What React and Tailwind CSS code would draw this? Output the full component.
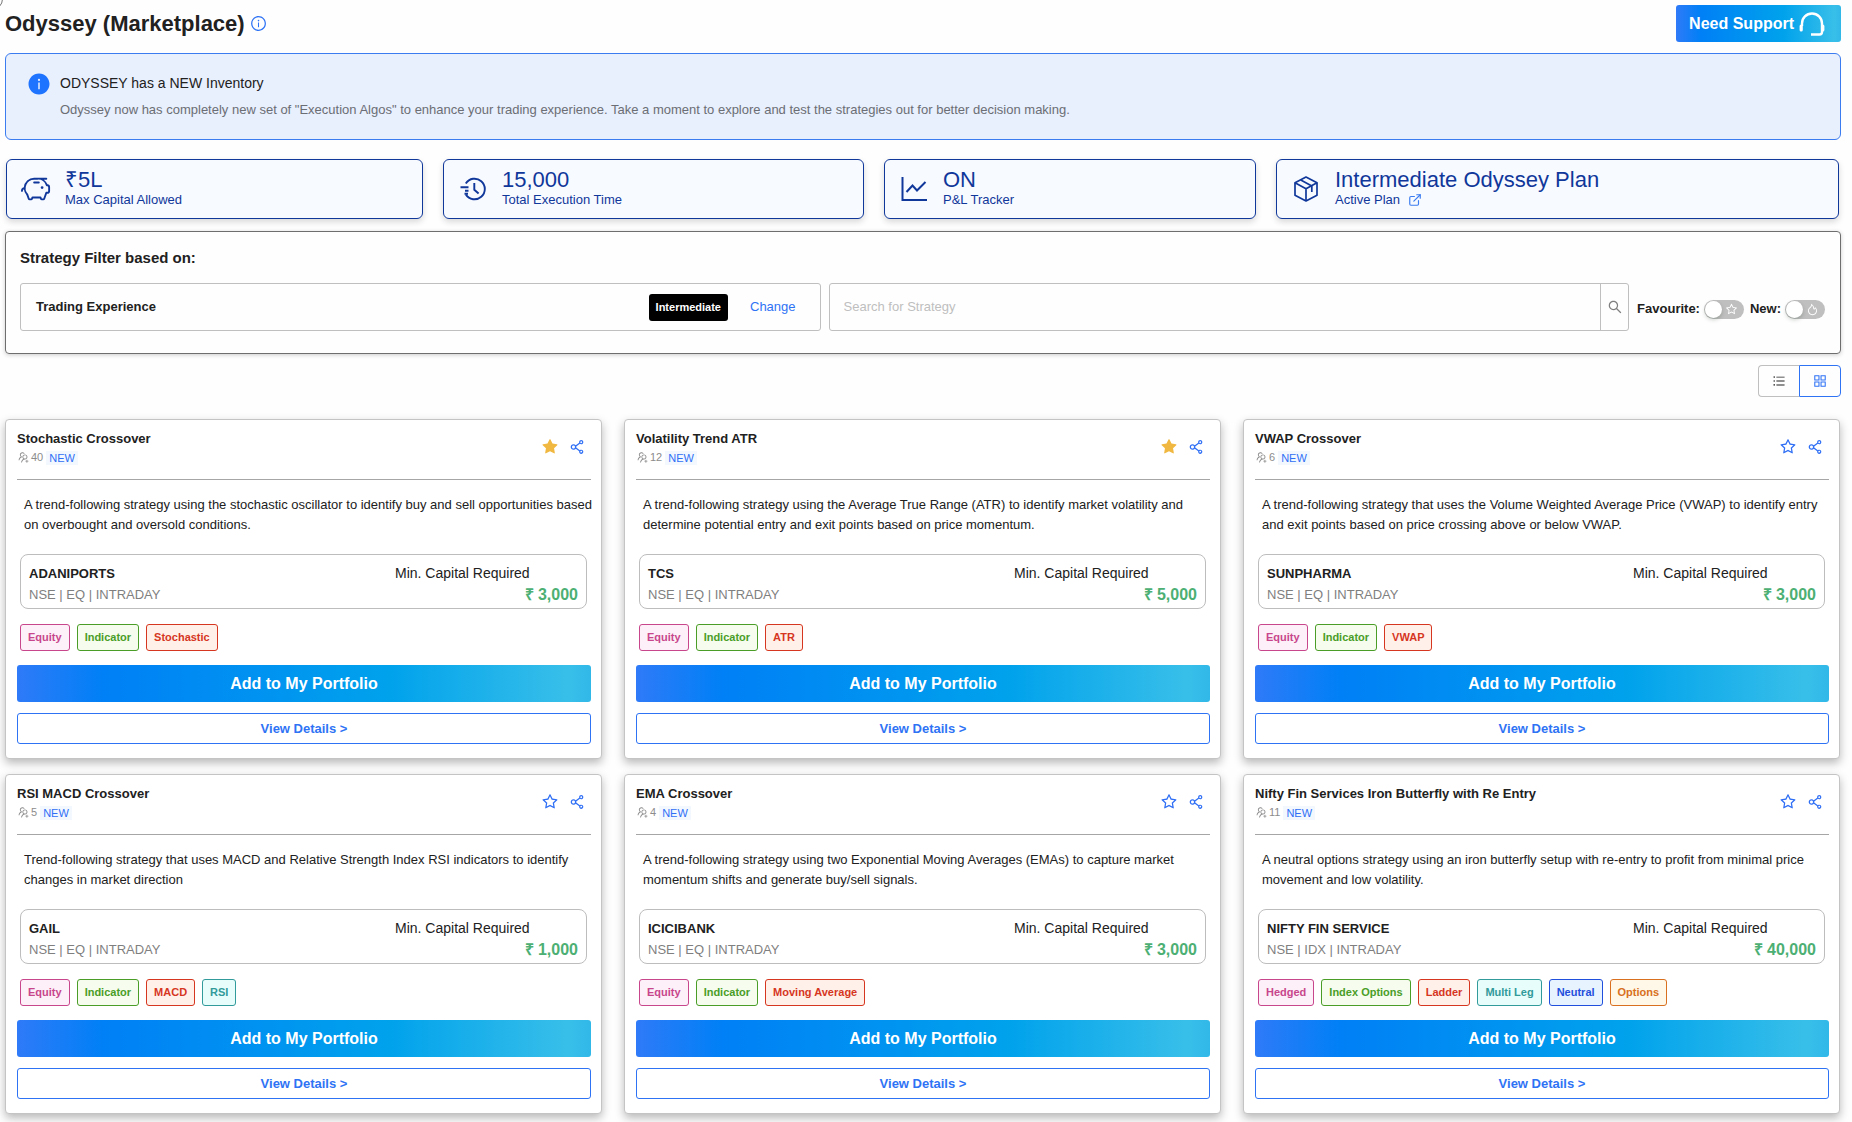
import React from 'react';
import { clsx } from 'clsx';
import {
  AiFillInfoCircle,
  AiFillStar,
  AiOutlineAppstore,
  AiOutlineFire,
  AiOutlineInfoCircle,
  AiOutlineSearch,
  AiOutlineShareAlt,
  AiOutlineStar,
  AiOutlineUnorderedList,
  AiOutlineUsergroupAdd,
} from 'react-icons/ai';
import { PiPiggyBank } from 'react-icons/pi';
import { FiExternalLink } from 'react-icons/fi';

const GRADIENT =
  'bg-[linear-gradient(90deg,#2f7af8_0%,#0080f6_15%,#00a2ec_65%,#38bfe9_96%,#32b8e8_100%)]';

const TAG_COLORS = {
  magenta: 'border-[#c8468c] bg-[#fdf0f8] text-[#c8468c]',
  green: 'border-[#4a9e28] bg-[#f6fcee] text-[#4a9e28]',
  red: 'border-[#d6361f] bg-[#fff1e9] text-[#d6361f]',
  cyan: 'border-[#319a9a] bg-[#e7fdfc] text-[#319a9a]',
  blue: 'border-[#1f4fdc] bg-[#e7f3fe] text-[#1f4fdc]',
  orange: 'border-[#d87020] bg-[#fff7e7] text-[#d87020]',
};

const TAG_ORDER = ['magenta', 'green', 'red', 'cyan', 'blue', 'orange'];

const STRATEGIES = [
  {
    name: 'Stochastic Crossover',
    users: 40,
    favourite: true,
    description:
      'A trend-following strategy using the stochastic oscillator to identify buy and sell opportunities based on overbought and oversold conditions.',
    symbol: 'ADANIPORTS',
    segment: 'NSE | EQ | INTRADAY',
    capital: '3,000',
    tags: ['Equity', 'Indicator', 'Stochastic'],
  },
  {
    name: 'Volatility Trend ATR',
    users: 12,
    favourite: true,
    description:
      'A trend-following strategy using the Average True Range (ATR) to identify market volatility and determine potential entry and exit points based on price momentum.',
    symbol: 'TCS',
    segment: 'NSE | EQ | INTRADAY',
    capital: '5,000',
    tags: ['Equity', 'Indicator', 'ATR'],
  },
  {
    name: 'VWAP Crossover',
    users: 6,
    favourite: false,
    description:
      'A trend-following strategy that uses the Volume Weighted Average Price (VWAP) to identify entry and exit points based on price crossing above or below VWAP.',
    symbol: 'SUNPHARMA',
    segment: 'NSE | EQ | INTRADAY',
    capital: '3,000',
    tags: ['Equity', 'Indicator', 'VWAP'],
  },
  {
    name: 'RSI MACD Crossover',
    users: 5,
    favourite: false,
    description:
      'Trend-following strategy that uses MACD and Relative Strength Index RSI indicators to identify changes in market direction',
    symbol: 'GAIL',
    segment: 'NSE | EQ | INTRADAY',
    capital: '1,000',
    tags: ['Equity', 'Indicator', 'MACD', 'RSI'],
  },
  {
    name: 'EMA Crossover',
    users: 4,
    favourite: false,
    description:
      'A trend-following strategy using two Exponential Moving Averages (EMAs) to capture market momentum shifts and generate buy/sell signals.',
    symbol: 'ICICIBANK',
    segment: 'NSE | EQ | INTRADAY',
    capital: '3,000',
    tags: ['Equity', 'Indicator', 'Moving Average'],
  },
  {
    name: 'Nifty Fin Services Iron Butterfly with Re Entry',
    users: 11,
    favourite: false,
    description:
      'A neutral options strategy using an iron butterfly setup with re-entry to profit from minimal price movement and low volatility.',
    symbol: 'NIFTY FIN SERVICE',
    segment: 'NSE | IDX | INTRADAY',
    capital: '40,000',
    tags: ['Hedged', 'Index Options', 'Ladder', 'Multi Leg', 'Neutral', 'Options'],
  },
];

function HeadsetIcon() {
  return (
    <svg viewBox="0 0 26 24" className="h-6 w-[26px]" fill="none" stroke="currentColor" strokeWidth="2.4">
      <path d="M3 14v-2.500a10 10 0 0 1 20 0V20a2.500 2.500 0 0 1-2.500 2.500H12" />
      <path d="M2.200 14v4M23.800 14v4" strokeWidth="3.200" strokeLinecap="round" />
    </svg>
  );
}

function HistoryIcon() {
  return (
    <svg viewBox="0 0 28 28" className="size-7" fill="none" stroke="currentColor" strokeWidth="1.9">
      <path d="M6.800 8.500a10.300 10.300 0 1 1 0 11" />
      <path d="M1.500 12.200h8M6 15.800h3.500M5.500 18.800h3.500" />
      <path d="M15.300 8v6.700l4.300 3.800" />
    </svg>
  );
}

function ChartIcon() {
  return (
    <svg viewBox="0 0 28 28" className="size-7" fill="none" stroke="currentColor" strokeWidth="2">
      <path d="M2.500 2v23H27" />
      <path d="M6.500 17l6-6.500 4.500 5L25.500 7" />
    </svg>
  );
}

function PackageIcon() {
  return (
    <svg viewBox="0 0 24 26" className="h-[26px] w-6" fill="none" stroke="currentColor" strokeWidth="1.700" strokeLinejoin="round">
      <path d="M12 1l11 5.800v12.400L12 25 1 19.200V6.800z" />
      <path d="M1 6.800l11 6 11-6M12 12.800V25" />
      <path d="M6.800 4l11 6v6" />
    </svg>
  );
}

function StatCard({ icon, value, label }) {
  return (
    <div className="flex h-[60px] items-center rounded-md border border-[#10379a] bg-[#f7faff] px-[14px] text-[#10379a] shadow-[0_3px_6px_rgba(0,0,0,0.15)]">
      <span className="flex w-[30px] shrink-0 justify-center">{icon}</span>
      <div className="ml-[14px] pb-[2px]">
        <div className="text-[22px] leading-6">{value}</div>
        <div className="flex items-center gap-2 text-[13px] leading-4">{label}</div>
      </div>
    </div>
  );
}

function Toggle({ id, label, icon }) {
  return (
    <div className="flex items-center gap-1">
      <label htmlFor={id} className="text-[13px] font-bold">{label}</label>
      <span className="relative flex h-[19px] w-10 items-center justify-end rounded-full bg-[#bfbfbf] pr-[6px] text-white">
        <input
          id={id}
          type="checkbox"
          role="switch"
          className="absolute inset-0 cursor-pointer appearance-none rounded-full before:absolute before:top-px before:left-px before:size-[17px] before:rounded-full before:bg-white before:shadow-[0_2px_4px_rgba(0,35,11,0.2)]"
        />
        {icon}
      </span>
    </div>
  );
}

function StrategyCard({ strategy }) {
  const { name, users, favourite, description, symbol, segment, capital, tags } = strategy;

  return (
    <article className="flex flex-col rounded-[4px] border border-[#c4c4c4] bg-white pr-[10px] pb-[14px] pl-[11px] shadow-[0_4px_10px_rgba(0,0,0,0.28)]">
      {/* Title and actions */}
      <header className="flex h-[60px] items-center justify-between border-b border-[#a6a6a6] pb-[6px]">
        <div className="pt-[2px]">
          <h3 className="text-[13px] leading-5 font-bold">{name}</h3>
          <div className="flex h-[18px] items-center text-[11px] text-[#8c8c8c]">
            <AiOutlineUsergroupAdd className="mr-px size-[13px]" />
            {users}
            <span className="ml-[3px] bg-[#f3f8ff] px-[3px] leading-[14px] text-[#2f6ff5]">NEW</span>
          </div>
        </div>
        <div className="mr-[5px] flex items-center gap-[9px] text-[#2f6ff5]">
          <button type="button" aria-label="Favourite">
            {favourite ? <AiFillStar className="size-[18px] text-[#f0b840]" /> : <AiOutlineStar className="size-[18px]" />}
          </button>
          <button type="button" aria-label="Share">
            <AiOutlineShareAlt className="size-[18px]" />
          </button>
        </div>
      </header>

      <p className="mt-[15px] -mr-1 pl-[7px] text-[13px] leading-5">{description}</p>

      {/* Instrument */}
      <div className="mr-1 ml-[3px] mt-[19px] flex h-[55px] items-center justify-between rounded-lg border border-[#bdbdbd] px-2 pt-1">
        <div>
          <div className="text-[13px] leading-[21px] font-bold">{symbol}</div>
          <div className="text-[13px] leading-[21px] text-[#7f7f7f]">{segment}</div>
        </div>
        <div className="w-[183px]">
          <div className="text-sm leading-[21px]">Min. Capital Required</div>
          <div className="text-right text-base leading-[21px] font-bold text-[#4caf73]">₹ {capital}</div>
        </div>
      </div>

      {/* Tags */}
      <div className="mx-[3px] mt-[15px] mb-[14px] flex flex-wrap gap-[7px]">
        {tags.map((tag, i) => (
          <span
            key={tag}
            className={clsx('rounded-[3px] border px-[7px] text-[11px] leading-[25px] font-bold', TAG_COLORS[TAG_ORDER[i]])}
          >
            {tag}
          </span>
        ))}
      </div>

      <button type="button" className={clsx('h-[37px] rounded-[3px] text-base font-bold text-white', GRADIENT)}>
        Add to My Portfolio
      </button>
      <button
        type="button"
        className="mt-[11px] h-[31px] rounded-[3px] border border-[#2f73f5] text-[13px] font-bold text-[#2f73f5]"
      >
        View Details &gt;
      </button>
    </article>
  );
}

export default function App() {
  return (
    <main className="relative min-h-screen bg-[#fefefe] pt-[5px] pr-[11px] pb-2 pl-[5px] font-['Liberation_Sans',Arial,sans-serif] text-[#212121]">
      {/* Edge of the collapsed drawer handle */}
      <span className="absolute -top-3 -left-[19px] size-[22px] rounded-full border border-[#777]" />

      {/* Page header */}
      <div className="flex h-[37px] items-center justify-between">
        <h1 className="flex items-center gap-[5px] text-[22px] leading-6 font-bold">
          Odyssey (Marketplace)
          <AiOutlineInfoCircle className="size-[17px] text-[#2f73f5]" />
        </h1>
        <button type="button" className={clsx('flex h-full items-center gap-[5px] rounded-[3px] pr-4 pl-[13px] text-base font-bold text-white', GRADIENT)}>
          Need Support
          <HeadsetIcon />
        </button>
      </div>

      {/* Announcement */}
      <section className="mt-[11px] flex h-[87px] rounded-md border border-[#3b7cf0] bg-[#e8effd] px-[21px] pt-[18px]">
        <AiFillInfoCircle className="size-6 shrink-0 text-[#1f74ff]" />
        <div className="ml-[9px]">
          <h2 className="text-sm leading-[22px]">ODYSSEY has a NEW Inventory</h2>
          <p className="mt-[6px] text-[13px] leading-5 text-[#6b6e74]">
            Odyssey now has completely new set of "Execution Algos" to enhance your trading experience. Take a moment to explore and test the strategies out for better decision making.
          </p>
        </div>
      </section>

      {/* Plan summary */}
      <section className="mt-[19px] mr-[2px] ml-px grid grid-cols-[417fr_421fr_372fr_563fr] gap-5">
        <StatCard icon={<PiPiggyBank className="size-[30px]" />} value="₹5L" label="Max Capital Allowed" />
        <StatCard icon={<HistoryIcon />} value="15,000" label="Total Execution Time" />
        <StatCard icon={<ChartIcon />} value="ON" label="P&L Tracker" />
        <StatCard
          icon={<PackageIcon />}
          value="Intermediate Odyssey Plan"
          label={
            <>
              Active Plan
              <a href="#plan" aria-label="Open plan" className="text-[#3b7cf0]">
                <FiExternalLink className="size-[14px]" />
              </a>
            </>
          }
        />
      </section>

      {/* Filters */}
      <section className="mt-3 h-[123px] rounded-[4px] border border-[#6e6e6e] px-[14px] pt-4 shadow-[0_1px_4px_rgba(0,0,0,0.2)]">
        <h2 className="text-[15px] leading-5 font-bold">Strategy Filter based on:</h2>
        <div className="mt-[15px] flex gap-2">
          <div className="flex h-12 flex-1 items-center rounded-[3px] border border-[#bfbfbf] text-[13px]">
            <span className="flex-1 pl-[15px] font-bold">Trading Experience</span>
            <span className="rounded-[3px] bg-black px-[7px] text-[11px] leading-[27px] font-bold text-white">Intermediate</span>
            <button type="button" className="mr-6 ml-[22px] text-[#2f73f5]">Change</button>
          </div>
          <div className="flex h-12 flex-1 rounded-[3px] border border-[#bfbfbf] text-[13px]">
            <input
              type="text"
              aria-label="Search for Strategy"
              placeholder="Search for Strategy"
              className="min-w-0 flex-1 px-[14px] outline-none placeholder:text-[#bfbfbf]"
            />
            <button type="button" aria-label="Search" className="flex w-7 items-center justify-center border-l border-[#bfbfbf] text-[#7f7f7f]">
              <AiOutlineSearch className="size-4" />
            </button>
          </div>
          <div className="flex items-center gap-[6px] pt-1 pr-px">
            <Toggle id="favourite" label="Favourite:" icon={<AiOutlineStar className="size-[13px]" />} />
            <Toggle id="new" label="New:" icon={<AiOutlineFire className="size-[13px]" />} />
          </div>
        </div>
      </section>

      {/* View switch */}
      <div className="mt-[11px] flex justify-end">
        <button type="button" aria-label="List view" className="flex h-8 w-[41px] items-center justify-center rounded-l-[4px] border border-r-0 border-[#bfbfbf] text-[#212121]">
          <AiOutlineUnorderedList className="size-[14px]" />
        </button>
        <button type="button" aria-label="Grid view" className="flex h-8 w-[42px] items-center justify-center rounded-r-[4px] border border-[#2f73f5] text-[#2f73f5]">
          <AiOutlineAppstore className="size-4" />
        </button>
      </div>

      {/* Strategies */}
      <section className="mt-[22px] mr-px grid grid-cols-3 gap-x-[22px] gap-y-[15px]">
        {STRATEGIES.map((strategy) => (
          <StrategyCard key={strategy.name} strategy={strategy} />
        ))}
      </section>
    </main>
  );
}
